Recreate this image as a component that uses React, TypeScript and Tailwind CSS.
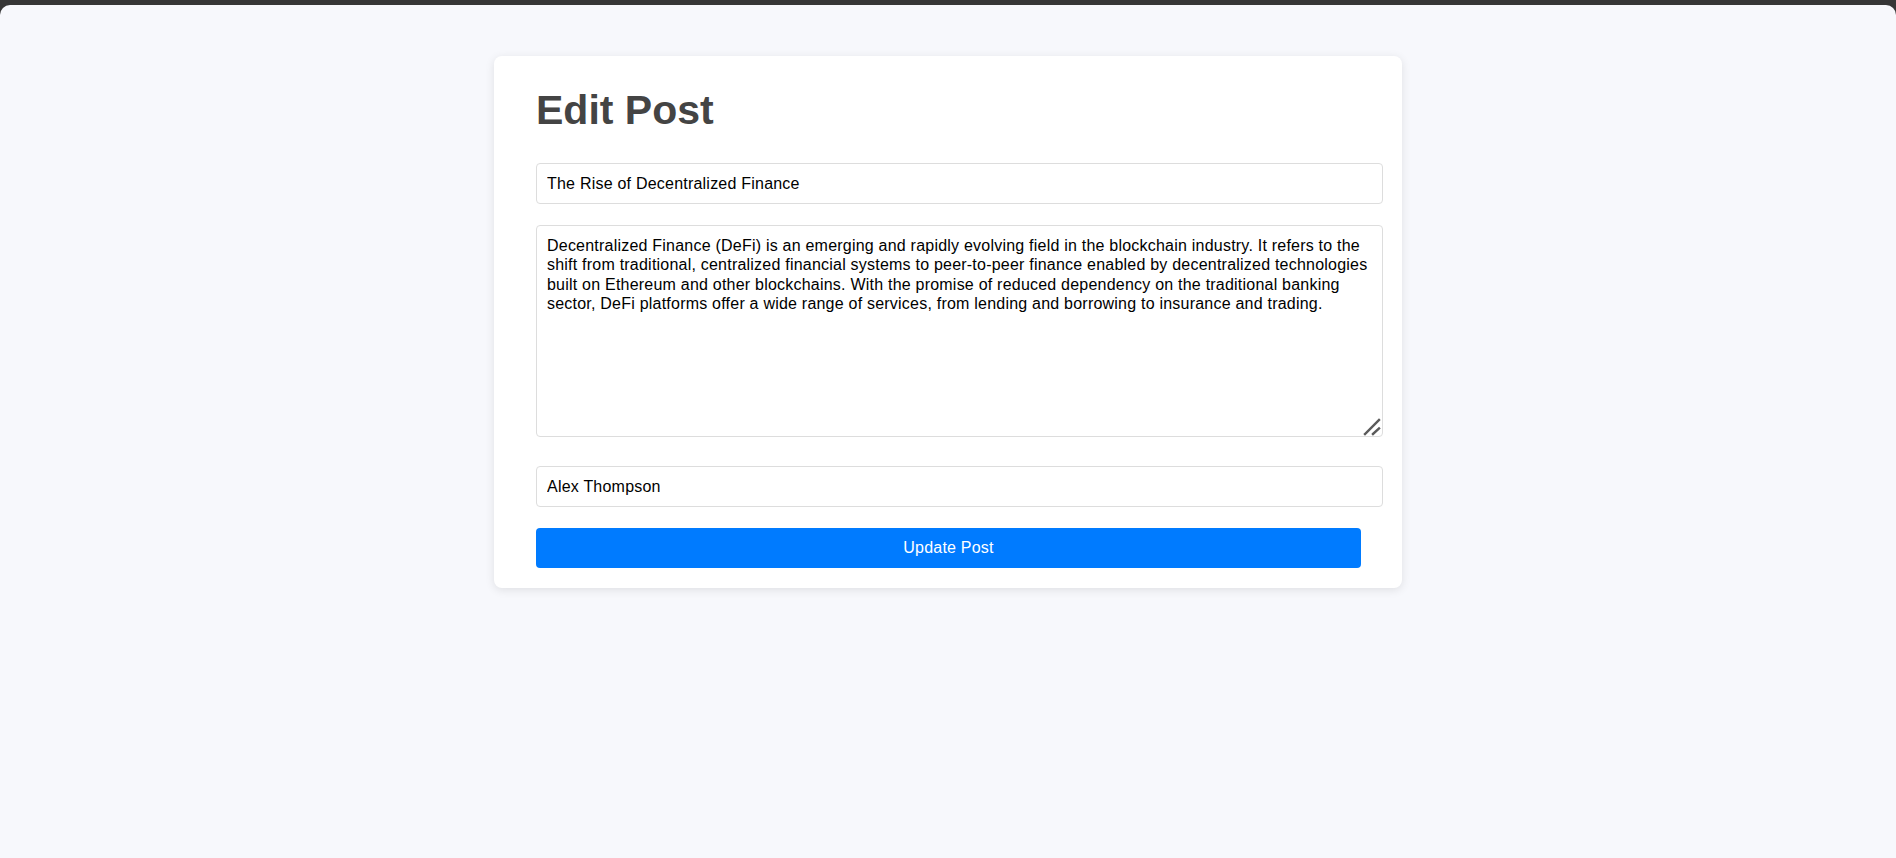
import React, { useState } from 'react';

const App = () => {
    const [title, setTitle] = useState('The Rise of Decentralized Finance');
    const [content, setContent] = useState(
        'Decentralized Finance (DeFi) is an emerging and rapidly evolving field in the blockchain industry. It refers to the shift from traditional, centralized financial systems to peer-to-peer finance enabled by decentralized technologies built on Ethereum and other blockchains. With the promise of reduced dependency on the traditional banking sector, DeFi platforms offer a wide range of services, from lending and borrowing to insurance and trading.'
    );
    const [author, setAuthor] = useState('Alex Thompson');

    return (
        <div className="min-h-screen bg-[#363636] pt-[5px] font-['Liberation_Sans',Arial,sans-serif]">
            <div className="min-h-[853px] rounded-t-[10px] bg-[#f7f8fc] pt-[51px]">
                <div className="mx-auto w-[908px] rounded-lg bg-white pl-[42px] pr-[19px] pt-[31px] pb-[20px] shadow-[0_2px_10px_rgba(0,0,0,0.1)]">
                    <h1 className="text-[41px] leading-[47px] font-bold text-[#444]">Edit Post</h1>

                    <form className="mt-[29px] flex flex-col tracking-[0.22px]" onSubmit={(e) => e.preventDefault()}>
                        <input
                            type="text"
                            value={title}
                            onChange={(e) => setTitle(e.target.value)}
                            className="h-[41px] w-[847px] rounded-[4px] border border-[#ddd] bg-white px-[10px] text-[16px] text-black outline-none"
                        />

                        <div className="relative mt-[21px] w-[847px]">
                            <textarea
                                value={content}
                                onChange={(e) => setContent(e.target.value)}
                                className="block h-[212px] w-full resize-none rounded-[4px] border border-[#ddd] bg-white p-[10px] text-[16px] leading-[19.33px] text-black outline-none"
                            />
                            {/* windows-style resize grip */}
                            <svg className="pointer-events-none absolute right-[1px] bottom-[1px] h-[20px] w-[20px]" viewBox="0 0 20 20">
                                <path d="M3 18 L17 4" stroke="#5a5a5a" strokeWidth="2.4" strokeLinecap="square" />
                                <path d="M11 18 L17 12.5" stroke="#5a5a5a" strokeWidth="2.4" strokeLinecap="square" />
                            </svg>
                        </div>

                        <input
                            type="text"
                            value={author}
                            onChange={(e) => setAuthor(e.target.value)}
                            className="mt-[29px] h-[41px] w-[847px] rounded-[4px] border border-[#ddd] bg-white px-[10px] text-[16px] text-black outline-none"
                        />

                        <button
                            type="submit"
                            className="mt-[21px] h-[40px] w-[825px] rounded-[4px] bg-[#007bff] text-[16px] text-white"
                        >
                            Update Post
                        </button>
                    </form>
                </div>
            </div>
        </div>
    );
};

export default App;
